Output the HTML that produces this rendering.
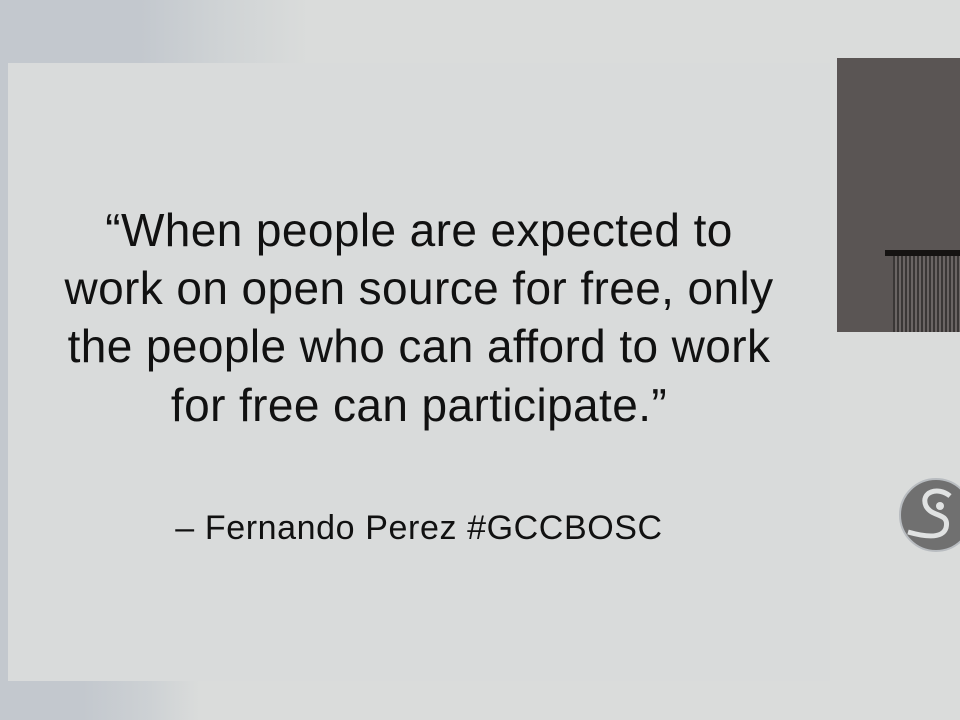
<!DOCTYPE html>
<html><head><meta charset="utf-8"><style>
html,body{margin:0;padding:0;width:960px;height:720px;overflow:hidden;background:#dadcdb;position:relative;font-family:"Liberation Sans",sans-serif}
.tl{position:absolute;left:0;top:0;width:320px;height:63px;background:linear-gradient(90deg,#c3c8ce 0,#c3c8ce 140px,#cfd3d5 220px,#dadcdb 310px)}
.lc{position:absolute;left:0;top:0;width:8px;height:720px;background:#c3c8ce}
.bl{position:absolute;left:0;top:681px;width:220px;height:39px;background:linear-gradient(90deg,#c3c8ce 0,#c3c8ce 82px,#cdd1d4 150px,#dadcdb 200px)}
.slide{position:absolute;left:8px;top:63px;width:822px;height:618px;background:#d9dbdb}
.line{position:absolute;left:0;width:822px;text-align:center;font-size:46px;color:#111;letter-spacing:0.4px;white-space:nowrap}
.attr{font-size:34px;letter-spacing:0.6px}
.video{position:absolute;left:837px;top:58px;width:123px;height:274px;background:#5a5554}
.podium{position:absolute;left:893px;top:250px;width:67px;height:82px;background:repeating-linear-gradient(90deg,#3a3736 0,#3a3736 2px,#6a6564 2px,#6a6564 4px)}
.ptop{position:absolute;left:885px;top:250px;width:75px;height:6px;background:#151312}
</style></head><body>
<div class="tl"></div><div class="lc"></div><div class="bl"></div>
<div class="slide">
<div class="line" style="top:140px">“When people are expected to</div>
<div class="line" style="top:198px">work on open source for free, only</div>
<div class="line" style="top:256px">the people who can afford to work</div>
<div class="line" style="top:315px">for free can participate.”</div>
<div class="line attr" style="top:446px">– Fernando Perez #GCCBOSC</div>
</div>
<div class="video"></div><div class="podium"></div><div class="ptop"></div>
<svg style="position:absolute;left:898px;top:478px" width="62" height="76" viewBox="0 0 62 76">
<circle cx="38" cy="37" r="36" fill="#707070" stroke="#b8bcc0" stroke-width="2"/>
<path d="M52 18 C40 8 22 14 28 28 C34 40 52 34 48 50 C44 62 24 58 10 54" fill="none" stroke="#e0e2e2" stroke-width="5"/>
<circle cx="42" cy="28" r="4" fill="#e0e2e2"/>
</svg>
</body></html>
